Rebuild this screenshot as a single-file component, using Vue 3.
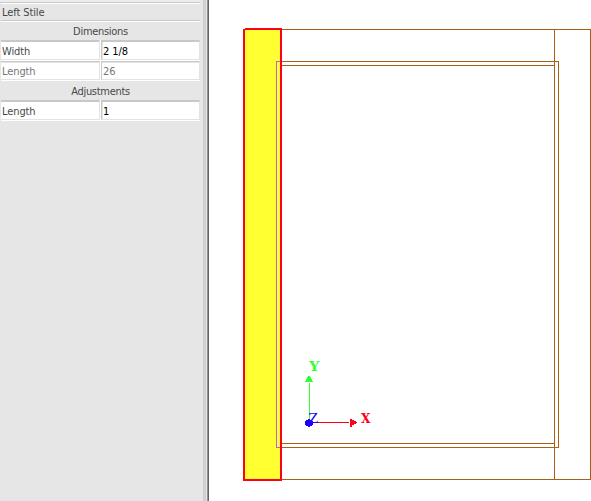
<script setup>
const groups = [
  { title: 'Dimensions', rows: [
    { label: 'Width', value: '2 1/8' },
    { label: 'Length', value: '26', disabled: true },
  ] },
  { title: 'Adjustments', rows: [{ label: 'Length', value: '1' }] },
]
</script>

<template>
  <main class="app">
    <aside class="panel">
      <div class="strip"></div>
      <section class="grid">
        <h1 class="name">Left Stile</h1>
        <template v-for="g in groups" :key="g.title">
          <h2 class="title">{{ g.title }}</h2>
          <div v-for="r in g.rows" :key="r.label" class="row" :class="{ disabled: r.disabled }">
            <span class="cell label">{{ r.label }}</span>
            <span class="cell value">{{ r.value }}</span>
          </div>
        </template>
      </section>
    </aside>
    <div class="splitter"></div>
    <svg class="drawing" viewBox="209 0 382 501" width="382" height="501" shape-rendering="crispEdges">
      <path d="M244 29.5H590.5V479.5H244M554.5 29V479M281 61.5H558.5V447.5H281M281 65.5H554M281 443.5H554" fill="none" stroke="#aa5f14" />
      <rect x="244" y="29" width="37" height="451" fill="#ffff32" />
      <path d="M281 61.5H276.5V447.5H281" fill="none" stroke="#b464dc" />
      <path d="M245 29H281V480H244V29" fill="none" stroke="#ff0019" stroke-width="2" />
      <path d="M309.5 422V383" stroke="#32ff32" />
      <path d="M308 376h2v1h1v2h1v2h1v1h-8v-1h1v-2h1v-2h1z" fill="#32ff32" />
      <path d="M310 422.5H349" stroke="#ff0019" />
      <path d="M350 419h2v1h2v1h2v1h1v1h-1v1h-2v1h-2v2h-2z" fill="#ff0019" />
      <path d="M308 419h2v1h2v1h1v4h-1v1h-2v1h-2v-1h-2v-1h-1v-4h1v-1h2z" fill="#1e00ff" />
      <g class="axis">
        <text x="309" y="371" textLength="10.5" lengthAdjust="spacingAndGlyphs" fill="#32ff32">Y</text>
        <text x="361" y="423" textLength="9.5" lengthAdjust="spacingAndGlyphs" fill="#ff0019">X</text>
        <text x="308.5" y="423" textLength="9.5" lengthAdjust="spacingAndGlyphs" class="z" fill="#1e00ff">Z</text>
      </g>
    </svg>
  </main>
</template>

<style>
body { margin: 0; overflow: hidden; }
</style>

<style scoped>
.app { display: flex; width: 591px; height: 501px; background: #fff; overflow: hidden; }
.panel {
  width: 203px; flex: none; background: #e6e6e6; color: #484848;
  font: 11px/18px "DejaVu Sans Condensed", "DejaVu Sans", sans-serif;
  letter-spacing: -0.1px;
}
.strip { box-sizing: border-box; width: 200px; height: 3px; border-bottom: 1px solid #cacaca; background: #ededed; }
.grid { width: 199px; margin-left: 1px; }
.name, .title { box-sizing: border-box; margin: 0; font: inherit; border-top: 1px solid #fff; }
.name { height: 18px; line-height: 18px; padding-left: 1px; border-bottom: 1px solid #c8c8c8; }
.title { height: 19px; line-height: 19px; text-align: center; letter-spacing: -0.3px; }
.row { display: flex; gap: 1px; height: 21px; box-sizing: border-box; background: #fff; border-bottom: 1px solid #fff; }
.row + .title { line-height: 21px; border-top: 0; }
.cell { display: block; box-sizing: border-box; height: 100%; width: 99px; border: 1px solid #e3e3e3; border-top: 2px solid #c8c8c8; background: #fff; line-height: 20px; white-space: pre; }
.row + .row { height: 20px; }
.row + .row .cell { border-top-width: 1px; box-shadow: inset 0 1px #e4e4e4; line-height: 19px; }
.label { border-left: 0; padding-left: 1px; }
.value { border-left-color: #c8c8c8; color: #000; padding-left: 1px; box-shadow: inset 1px 0 #e4e4e4; }
.disabled, .disabled .value { color: #777; }
.splitter { width: 6px; flex: none; background: linear-gradient(90deg, #d0d0d0 0 3px, #e5e5e5 3px 4px, #929292 4px 5px, #646464 5px 6px); }
.drawing { display: block; flex: none; }
.axis { font: bold 12px "DejaVu Serif", serif; }
.axis .z { font-weight: normal; }
</style>
